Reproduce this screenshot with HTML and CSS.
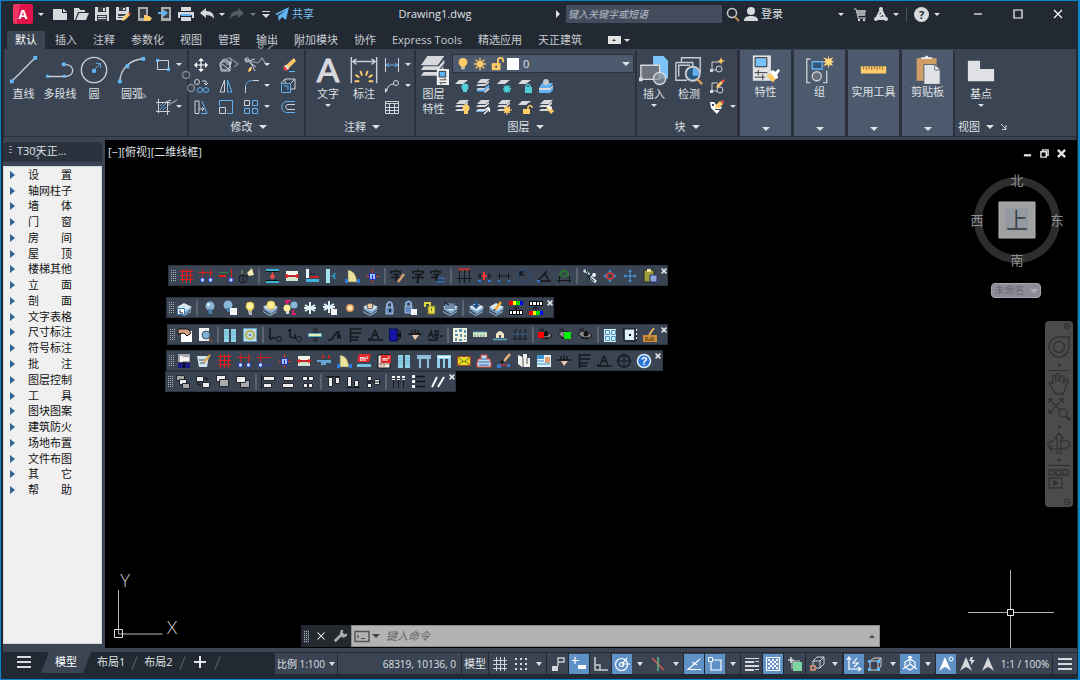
FILE: index.html
```html
<!DOCTYPE html>
<html lang="zh-CN">
<head>
<meta charset="utf-8">
<title>Drawing1.dwg</title>
<link rel="stylesheet" href="styles.css">
</head>
<body>
<svg class="sprite" aria-hidden="true">
<symbol id="new" viewBox="0 0 16 16"><path class="f" d="M1 3h9v4h5v7H1z"/><path class="f" d="M11 2.500l4 3.500h-4z"/></symbol>
<symbol id="open" viewBox="0 0 16 16"><path class="f" d="M1 14V2h5l1 2h5v2H5L2 14z"/><path class="f" d="M6 7h10l-3 7H3z"/></symbol>
<symbol id="save" viewBox="0 0 16 16"><path class="f" d="M1 1h14v14H1z"/><path class="d" d="M4 1h8v5H4zM3 9h10v6H3z"/><path class="f" d="M9 2h2v3H9zM4 10h8v1H4zM4 12h8v1H4z"/></symbol>
<symbol id="saveas" viewBox="0 0 16 16"><path class="f" d="M1 1h13v7l-6 6H1z"/><path class="d" d="M4 1h7v4H4zM3 8h8l-4 4H3z"/><path class="f" d="M8 2h2v2H8zM3 10h6v1H3z"/><path class="y" d="M7 15l1-3 5-5 2 2-5 5z"/><path class="r" d="M13 7l1-1 2 2-1 1z"/></symbol>
<symbol id="mopen" viewBox="0 0 16 16"><path fill="#a9a9a9" d="M2 1h10v14H2z"/><path class="d" d="M4 3h6v9H4z"/><path class="y" d="M8 14V9h2l1 1h3v1l2 1-2 3H8z"/></symbol>
<symbol id="msave" viewBox="0 0 16 16"><path fill="#a9a9a9" d="M4 1h10v14H4z"/><path class="d" d="M6 3h6v9H6z"/><path d="M1 6h5V3l5 4-5 4V8H1z" fill="#62b2f0"/></symbol>
<symbol id="print" viewBox="0 0 16 16"><path class="f" d="M3 1h10v4H3zM0 6h16v6h-2V9H2v3H0z"/><path fill="#62b2f0" d="M3 8h10v2H3z"/><path class="f" d="M3 11h10v4H3z"/></symbol>
<symbol id="undo" viewBox="0 0 16 16"><path class="f" d="M1 7l6-5v3c6 0 8 3 8 8-2-3-4-4-8-4v3z"/></symbol>
<symbol id="redo" viewBox="0 0 16 16"><path fill="#555b65" d="M15 7L9 2v3c-6 0-8 3-8 8 2-3 4-4 8-4v3z"/></symbol>
<symbol id="menu" viewBox="0 0 16 16"><path class="f" d="M4 5h8v1H4zM4 8h8l-4 4z"/></symbol>
<symbol id="plane" viewBox="0 0 16 16"><path fill="#62b2f0" d="M1 8L15 1l-3 13-4-3-3 4-1-5 8-6-9 5z"/></symbol>
<symbol id="search" viewBox="0 0 16 16"><circle class="s2" cx="7" cy="7" r="4.500"/><path class="yl" d="M10 11l4 4"/></symbol>
<symbol id="user" viewBox="0 0 16 16"><circle class="f" cx="8" cy="5" r="4"/><path class="f" d="M1 15c0-4 3-5 7-5s7 1 7 5z"/></symbol>
<symbol id="cart" viewBox="0 0 16 16"><path class="s" d="M2 3h2l2 9h8"/><path fill="#a5a7aa" d="M4 4h10l-1 6H6z"/><circle class="f" cx="7" cy="14" r="1.200"/><circle class="f" cx="12" cy="14" r="1.200"/></symbol>
<symbol id="apps" viewBox="0 0 16 16"><path d="M8 3L3 13h10zM8 3l1 5-6 5M3 13l9-2" fill="none" stroke="#d7d9dc" stroke-width="2"/><circle class="f" cx="8" cy="3" r="2"/><circle class="f" cx="3" cy="13" r="2"/><circle class="f" cx="13" cy="13" r="2"/></symbol>
<symbol id="min" viewBox="0 0 16 16"><path class="w" d="M4 8h8"/></symbol>
<symbol id="max" viewBox="0 0 16 16"><path class="w" d="M4 4h8v8H4z"/></symbol>
<symbol id="x" viewBox="0 0 16 16"><path class="w" d="M4 4l8 8M12 4l-8 8"/></symbol>

<symbol id="line" viewBox="0 0 32 32"><path class="s2" d="M3 28L28 3"/><path class="n" d="M1 26h4v4H1zM26 1h4v4h-4z"/></symbol>
<symbol id="pline" viewBox="0 0 32 32"><path class="s2" d="M2 23h20c10-1 10-12 0-13"/><path class="n" d="M1 21h3v3H1zM19 21h3v3h-3zM18 8h4v4h-4z"/></symbol>
<symbol id="circle" viewBox="0 0 32 32"><circle class="s2" cx="16" cy="16" r="13.500"/><path class="bl" d="M15 17l8-8M18 9h5v5"/><path class="n" d="M14 15h4v4h-4z"/></symbol>
<symbol id="arc" viewBox="0 0 32 32"><path class="s2" d="M3 28C4 14 14 5 28 4"/><path class="n" d="M1 26h4v4H1zM9 10h4v4H9zM26 2h4v4h-4z"/></symbol>
<symbol id="rect" viewBox="0 0 16 16"><path class="s" d="M2.500 3.500h11v9h-11z"/><path class="n" d="M1 2h3v3H1zM12 11h3v3h-3z"/></symbol>
<symbol id="hatch" viewBox="0 0 16 16"><path class="s" d="M3.500 0v14M12.500 2v14M1 3.500h14M1 12.500h14M11 3l5-2"/><path class="bl" d="M5 7l3-3M5 11l6-7M8 11l3-3"/></symbol>
<symbol id="move" viewBox="0 0 16 16"><path class="w" d="M8 3v10M3 8h10" stroke-width="2"/><path fill="#fff" d="M8 1l3 3H5zM8 15l3-3H5zM1 8l3-3v6zM15 8l-3-3v6z"/></symbol>
<symbol id="rotate" viewBox="0 0 16 16"><path class="s" d="M3 5v9h9V5zM4 7l8 6M13 2v5H8"/><circle class="s" cx="7" cy="8" r="5"/></symbol>
<symbol id="trim" viewBox="0 0 16 16"><path class="s" d="M2 2l11 8M7 4l5 10M5 4L12 2M8 10l-2 4"/><circle class="s" cx="4" cy="3" r="2"/><path class="y" d="M6 11l3-1-1 4-3 1z"/></symbol>
<symbol id="erase" viewBox="0 0 16 16"><path class="y" d="M5 9l9-8 2 3-8 8z"/><path fill="#f3f3f3" d="M4 9l2-1 3 4-2 1z"/><path class="r" d="M3 10l2-1 3 4-3 1z"/><path class="bl" d="M9 14.500h6"/></symbol>
<symbol id="copy" viewBox="0 0 16 16"><circle class="s" cx="4" cy="4" r="2.500"/><path class="s" d="M9 3h4v4M11 5l2 2 2-2"/><circle class="bl" cx="7" cy="12" r="2.500"/><circle class="bl" cx="13" cy="12" r="2.500"/></symbol>
<symbol id="mirror" viewBox="0 0 16 16"><path class="s" d="M6.500 2v12H2z"/><path class="bl" d="M9.500 2v12H14z"/></symbol>
<symbol id="fillet" viewBox="0 0 16 16"><path class="s" d="M2.500 15V9M10 2.500h6"/><path class="bl" d="M2.500 9c0-4 3-6.500 7-6.500"/></symbol>
<symbol id="box" viewBox="0 0 16 16"><path class="s" d="M5 5V1h10v10h-4M11 5l4-4M1 5l4-4"/><path class="bl" d="M1.500 5.500h9v9h-9zM4 8h4v4"/></symbol>
<symbol id="stretch" viewBox="0 0 16 16"><path class="s" d="M6 14.500H2V2h4v12M6 10h5M9 8l2 2-2 2"/><path class="bl" d="M9 2l5 12.500H8"/></symbol>
<symbol id="scale" viewBox="0 0 16 16"><path class="bl" d="M1.500 7V1.500h13v13H9"/><path class="s" d="M1.500 8.500h6v6h-6z"/></symbol>
<symbol id="array" viewBox="0 0 16 16"><path class="bl" d="M9.500 1.500h5v5h-5zM9.500 9.500h5v5h-5zM1.500 9.500h5v5h-5z"/><path class="s" d="M1.500 1.500h5v5h-5z"/></symbol>
<symbol id="offset" viewBox="0 0 16 16"><path class="bl" d="M15 2.500H7c-7 0-7 11 0 11h8"/><path class="s" d="M15 5.500H8c-3 0-3 5 0 5h7"/></symbol>

<symbol id="text" viewBox="0 0 32 32"><text x="16" y="29" font-size="36" text-anchor="middle" font-family="Liberation Sans" fill="#d7d9dc" stroke="#d7d9dc" stroke-width="1.200">A</text></symbol>
<symbol id="dim" viewBox="0 0 32 32"><path class="s2" d="M2.500 2v28M29.500 2v28M4 7h24M8 4L4 7l4 3M24 4l4 3-4 3"/><path d="M7 21l4 3M12 17l2 5M20 17l-2 5M25 21l-4 3M6 28h5M21 28h5" stroke="#ffcb68" stroke-width="2"/></symbol>
<symbol id="lin" viewBox="0 0 16 16"><path class="s" d="M1.500 1v14M14.500 1v14"/><path class="bl" d="M2 8h12M5 6L2 8l3 2M11 6l3 2-3 2"/></symbol>
<symbol id="leader" viewBox="0 0 16 16"><path class="s" d="M1 14L5 8q1-2 5-2"/><path class="f" d="M1 15v-5l3 2z"/><circle class="s" cx="12" cy="5" r="2.500"/></symbol>
<symbol id="table" viewBox="0 0 16 16"><path class="s" d="M1.500 2.500h13v12h-13zM1 4.500h14M1 8.500h14M1 11.500h14M5.500 4v11M10.500 4v11"/></symbol>
<symbol id="layers" viewBox="0 0 32 32"><g class="f"><path d="M9 1h18l-7 10H2zM5 12h16l6-7v4l-6 7H2zM5 18h16l5-6v4l-5 6H2z"/></g><path fill="#eef0f2" d="M19 15h13v17H19z"/><path fill="#5cb3f5" stroke="#333" d="M21.500 17.500h7v6h-7z"/><path d="M22 26.500h7l-2-2M29 29.500h-7l2 2" fill="none" stroke="#444"/></symbol>
<symbol id="bulb" viewBox="0 0 16 16"><circle class="y" cx="8" cy="6" r="5"/><path class="y" d="M5 8h6l-1 4H6z"/><path class="f" d="M6 12h4v2H6z"/></symbol>
<symbol id="sun" viewBox="0 0 16 16"><circle class="y" cx="8" cy="8" r="4"/><path d="M8 1v3M8 12v3M1 8h3M12 8h3M3 3l2 2M11 11l2 2M13 3l-2 2M3 13l2-2" stroke="#ffcb68" stroke-width="1.500"/></symbol>
<symbol id="lock" viewBox="0 0 16 16"><path d="M9 8V4q0-3 3-3t3 3v2" fill="none" stroke="#ffcb68" stroke-width="2"/><path class="y" d="M2 7h10v8H2z"/><path class="d" d="M6 10h2v2H6z"/></symbol>
<symbol id="ly" viewBox="0 0 16 16"><path class="f" d="M5 2h9l-5 4H1z"/></symbol>
<symbol id="ly3" viewBox="0 0 16 16"><path class="f" d="M6 1h9l-4 4H2zM3 6h7l4-3v2l-4 3H1zM3 10h7l4-3v2l-4 3H1z"/></symbol>
<symbol id="l1" viewBox="0 0 16 16"><use href="#ly"/><circle fill="#4fd0d8" cx="11" cy="9" r="3.500"/><path fill="#4fd0d8" d="M9 11h4v3H9z"/></symbol>
<symbol id="l2" viewBox="0 0 16 16"><use href="#ly3"/><path class="bl" d="M2 12.500h7l5-5" stroke-width="2"/><path class="f" d="M13 10l2 1-5 4-1-1z"/></symbol>
<symbol id="l3" viewBox="0 0 16 16"><use href="#ly"/><circle cx="11" cy="11" r="3" fill="#2c8f9c"/><path d="M11 7v8M7 11h8M8 8l6 6M14 8l-6 6" stroke="#4fd0d8" stroke-width="1.500"/></symbol>
<symbol id="l4" viewBox="0 0 16 16"><use href="#ly"/><path fill="none" stroke="#4fd0d8" stroke-width="1.500" d="M9 9V8q2-3 4 0v2"/><path fill="#4fd0d8" d="M8 9h7v6H8z"/></symbol>
<symbol id="l5" viewBox="0 0 16 16"><path fill="#62b2f0" d="M4 5h11l-3 5H1zM1 12h11l3-3v3l-3 3H1z"/><path class="f" d="M1 10h11l3-3v2l-3 3H1z"/><circle fill="#c4c9d0" cx="8" cy="4" r="3"/></symbol>
<symbol id="l6" viewBox="0 0 16 16"><use href="#ly3"/><circle class="y" cx="12" cy="9" r="3.500"/><path class="y" d="M10 12h4v3h-4z"/></symbol>
<symbol id="l7" viewBox="0 0 16 16"><use href="#ly3"/><path class="bl" d="M1 12.500h8"/><path class="w" d="M9 15l5-5M11 9.500h3.500V13"/></symbol>
<symbol id="l8" viewBox="0 0 16 16"><use href="#ly3"/><circle class="y" cx="11" cy="11" r="3"/><path d="M11 6v10M6 11h10M8 8l6 6M14 8l-6 6" stroke="#ffcb68"/></symbol>
<symbol id="l9" viewBox="0 0 16 16"><use href="#ly"/><path class="y" d="M6 10h7v5H6z"/><path fill="none" stroke="#ffcb68" stroke-width="1.500" d="M11 10V8q2-3 4 0v1"/></symbol>
<symbol id="l10" viewBox="0 0 16 16"><use href="#ly3"/><path class="y" d="M8 9l3-2 5 5-3 3z"/><path fill="#fff" d="M9 8l2-2 3 3-2 2z"/></symbol>

<symbol id="insert" viewBox="0 0 32 32"><path fill="#7cc3fa" d="M15 1h11l5 5v19H15z"/><path fill="#6d7480" stroke="#d7d9dc" stroke-width="1.500" d="M2 11h20v15H2z"/><path class="f" d="M0 24h4v4H0z"/><circle fill="#8a909a" fill-opacity=".7" stroke="#d7d9dc" stroke-width="1.500" cx="22" cy="25" r="6.500"/></symbol>
<symbol id="detect" viewBox="0 0 32 32"><path class="s2" d="M8 7V3h20v16M2 8h18v4M2 8v19h12"/><path class="s2" d="M5 23V11h12"/><circle fill="#2b5878" stroke="#c9ccd1" stroke-width="2" cx="20" cy="20" r="7.500"/><path fill="#62b2f0" d="M20 14h3q4 3 3 8h-6z"/><path d="M25 26l5 5" stroke="#d99a4e" stroke-width="2.500"/></symbol>
<symbol id="b1" viewBox="0 0 16 16"><path class="s" d="M11 5H3v8h5"/><circle class="s" cx="10" cy="12" r="3"/><path class="f" d="M1 12h3v3H1z"/><path class="y" d="M12 0l1 3 3 1-3 1-1 3-1-3-3-1 3-1z"/></symbol>
<symbol id="b2" viewBox="0 0 16 16"><path class="s" d="M9 5H3v8h5"/><circle class="s" cx="11" cy="12" r="3"/><path class="f" d="M1 12h3v3H1z"/><path class="y" d="M7 10l1-3 4-4 2 2-4 4z"/><path class="r" d="M12 3l2-2 2 2-2 2z"/></symbol>
<symbol id="b3" viewBox="0 0 16 16"><path fill="#fff" d="M1 3h4l3 4 5 1-5 7-6-6z"/><path class="d" d="M3 5h2v2H3zM6 10h5v1H6z"/><path class="y" d="M6 9l1-3 4-4 3 3-4 4z"/><path class="r" d="M12 2l2-1 1 2-1 2z"/></symbol>
<symbol id="props" viewBox="0 0 32 32"><path fill="#dfe1e4" d="M2 1h20v28H2z"/><path fill="#78c1fa" stroke="#222" d="M4.500 3.500h13v10h-13z"/><path d="M4 20h14M4 25h11M8 17v6M13 22v6" stroke="#333"/><path class="y" d="M17 23l7-3 5 5-5 6z"/><path fill="#fff" d="M21 19l3-2 3 2 3-3 2 2-3 4 1 4-3 1z"/></symbol>
<symbol id="group" viewBox="0 0 32 32"><path class="s2" d="M6 5H2v26h4M20 31h4V18"/><path fill="#315878" stroke="#62b2f0" stroke-width="1.500" d="M8 8h11v8H8z"/><circle fill="#68707d" stroke="#c9ccd1" stroke-width="1.500" cx="13" cy="24" r="5"/><path fill="#ffd77c" d="M26 1l1 4 4-2-2 4 4 1-4 1 2 4-4-2-1 5-1-5-5 2 3-4-4-1 4-1-3-4 5 2z"/></symbol>
<symbol id="ruler" viewBox="0 0 32 32"><path class="y" d="M2 13h28v8H2z"/><path d="M5 13v3M8 13v4M11 13v3M14 13v4M17 13v3M20 13v4M23 13v3M26 13v4" stroke="#7d6334"/></symbol>
<symbol id="clip" viewBox="0 0 32 32"><path fill="#cf9f65" d="M4 4h22v25H4z"/><path fill="#eee" d="M9 5V3h4q2-4 4 0h4v2z"/><path fill="#dfe1e4" stroke="#555d6a" d="M12 11h13l5 5v17H12z"/><path fill="#fff" stroke="#555d6a" d="M24 11v6h6z"/></symbol>
<symbol id="base" viewBox="0 0 32 32"><path fill="#dfe1e4" d="M2 6h13v9h15v13H2z"/></symbol>

<symbol id="grid" viewBox="0 0 16 16"><path stroke="#f01818" fill="none" d="M2 3.500h13M2 7.500h13M2 11.500h13M4.500 1v14M8.500 1v14M12.500 1v14"/></symbol>
<symbol id="ax1" viewBox="0 0 16 16"><path stroke="#d42020" fill="none" d="M1 4.500h14M4.500 1v9M12.500 1v9"/><circle class="ball" cx="4.500" cy="12" r="2.200"/><circle class="ball" cx="12.500" cy="12" r="2.200"/></symbol>
<symbol id="ax2" viewBox="0 0 16 16"><path stroke="#2e8b3c" d="M1 4.500h9"/><path stroke="#d42020" d="M13.500 1v9"/><path stroke="#f01818" stroke-width="2" d="M1 8h7"/><circle class="ball" cx="13" cy="12" r="2.200"/></symbol>
<symbol id="ax3" viewBox="0 0 16 16"><path stroke="#d42020" d="M1 4.500h14M4.500 1v9"/><circle class="ball" cx="4.500" cy="12" r="2.200"/><path stroke="#1e3fc0" stroke-dasharray="2 1" d="M8 12h8"/></symbol>
<symbol id="ax4" viewBox="0 0 16 16"><circle class="k" cx="5" cy="11" r="4"/><path class="k" d="M5 8v6M8 9l5-4"/><path stroke="#6fae5c" d="M4 2v4"/><path fill="#f5eeb0" d="M9 5l5-5 1 4 1 3-5 1z"/></symbol>
<symbol id="wa1" viewBox="0 0 16 16"><path fill="#39b6d4" d="M2 1h13v2H2zM2 13h13v2H2z"/><path fill="#111" d="M2 3h13v1H2zM2 12h13v1H2z"/><path class="r" d="M8 4v2l-3 3h7L9 6V4zM7 9h3v2H7z"/></symbol>
<symbol id="wa2" viewBox="0 0 16 16"><path fill="#f4f6ee" d="M2 3h12v4H2z"/><path fill="#cfe6ca" d="M2 9h12v4H2z"/><path stroke="#e22" stroke-width="1.500" d="M1 8h14M3 6v4M13 6v4"/></symbol>
<symbol id="wa3" viewBox="0 0 16 16"><path fill="#e8f4fa" d="M2 1h3v9H2z"/><path fill="#c22" d="M6 8h9v2H6z"/><path fill="#41b5df" d="M2 11h13v3H2z"/><path class="k" d="M6 7l2-2M9 7l2-2"/></symbol>
<symbol id="wa4" viewBox="0 0 16 16"><path fill="#9fe3ee" d="M2 1h4v14H2z"/><path stroke="#39a9d8" d="M7 8h5M10 5v6M12 5l-2 3 2 3"/></symbol>
<symbol id="door" viewBox="0 0 16 16"><path fill="#ece49c" stroke="#6d6a4a" stroke-width=".6" d="M4 14V2c6 1 8 5 9 12z"/><path fill="#2b7be0" d="M1 11h3v4H1zM13 11h3v4h-3z"/></symbol>
<symbol id="col" viewBox="0 0 16 16"><path stroke="#d33" d="M8.500 1v14M2 8.500h13"/><path fill="#9fc4ff" stroke="#2430b0" d="M5.500 5.500h6v6h-6z"/><path fill="#2430b0" d="M8 7h1v4H8z"/></symbol>
<symbol id="char" viewBox="0 0 16 16"><path class="k" d="M8 1v2M3 6V3.500h10V6M5 6.500h6l-3 2V14H6M2 9.500h12" stroke-width="1.500"/></symbol>
<symbol id="charp" viewBox="0 0 16 16"><path class="k" d="M6 1v2M1 6V3.500h9V6M3 6.500h5l-2 2V13M1 9.500h9" stroke-width="1.500"/><path stroke="#d8a070" stroke-width="2.500" d="M8 14l6-8"/></symbol>
<symbol id="charl" viewBox="0 0 16 16"><path class="k" d="M6 1v2M1 6V3.500h9V6M3 6.500h5l-2 2V13M1 9.500h9" stroke-width="1.500"/><path stroke="#345f99" stroke-width="2" d="M8 10h7M6 14h9"/></symbol>
<symbol id="dm1" viewBox="0 0 16 16"><path stroke="#c33" stroke-width="2" d="M2 1.500h12"/><path class="k" d="M3.500 2v13M8.500 2v13M13.500 2v13M1 10.500h15"/></symbol>
<symbol id="dm2" viewBox="0 0 16 16"><path class="k" d="M1 8h15M4 5v6M13 5v6"/><path stroke="#e33" stroke-width="2" d="M8 4v8M6 8h5"/><path fill="#2d7bd6" d="M2 12h3v2H2zM12 12h3v2h-3z"/></symbol>
<symbol id="dm3" viewBox="0 0 16 16"><path class="k" d="M1 8h14M3.500 5v6M12.500 5v6"/><path fill="#2d7bd6" d="M2 12h2v2H2zM12 12h2v2h-2z"/></symbol>
<symbol id="dm4" viewBox="0 0 16 16"><circle cx="8" cy="8" r="6" fill="none" stroke="#284a83"/><path class="k" d="M8 8L4 5M4 8V4h4" stroke-width="1.500"/></symbol>
<symbol id="dm5" viewBox="0 0 16 16"><path class="k" d="M2 13L11 3M2 13h13M8 6q4 2 4 7" stroke-width="1.500"/><path fill="#2d7bd6" d="M1 12h3v2H1z"/></symbol>
<symbol id="dm6" viewBox="0 0 16 16"><path stroke="#28772f" stroke-width="2" fill="none" d="M4 8q0-5 4-5t4 5M6 9l6-2"/><path class="k" d="M1 12.500h14M3.500 8v7M13.500 8v7"/></symbol>
<symbol id="ed1" viewBox="0 0 16 16"><path stroke="#c9e7e8" stroke-width="3" d="M2 2l5 5M8 9l6 5"/><path class="k" d="M4 2l4 10M3 5l9 8"/><circle fill="#eef" cx="12" cy="7" r="2"/></symbol>
<symbol id="ed2" viewBox="0 0 16 16"><path class="mv" d="M8 1l3 4H5zM8 15l3-4H5zM1 8l4-3v6zM15 8l-4-3v6z"/><circle cx="8" cy="8" r="3" fill="none" stroke="#d33" stroke-width="1.500"/></symbol>
<symbol id="ed3" viewBox="0 0 16 16"><path class="mv" d="M8 1l3 3H9v3h3V5l3 3-3 3V9H9v3h2l-3 3-3-3h2V9H4v2L1 8l3-3v2h3V4H5z"/></symbol>
<symbol id="paste" viewBox="0 0 16 16"><path fill="#9a9f38" stroke="#222" d="M2 2h10v12H2z"/><path fill="#e6e6a0" d="M5 1h4v3H5z"/><path fill="#8fa2d5" stroke="#25306c" d="M8 7h7v7H8z"/></symbol>

<symbol id="lyb" viewBox="0 0 16 16"><path fill="#7fa9cc" d="M1 9l7-4 8 4-7 5z"/><path fill="#d6e7f2" d="M1 7l7-4 8 4-7 4z"/><path fill="#9cbfd9" d="M1 11l7 4 7-4v1l-7 4-7-4z"/></symbol>
<symbol id="q1" viewBox="0 0 16 16"><use href="#lyb"/><path fill="#fff" stroke="#2e80b8" d="M1.500 8.500h7v6h-7z"/><path class="k" d="M4 10v3h3"/></symbol>
<symbol id="q2" viewBox="0 0 16 16"><circle fill="#8ab6da" cx="8" cy="6" r="4.500"/><path fill="#4a7fa8" d="M6 9h4v5H7z"/><circle fill="#e1f3ff" cx="6.500" cy="4.500" r="1.500"/></symbol>
<symbol id="q3" viewBox="0 0 16 16"><circle fill="#8ab6da" cx="6" cy="5" r="4.500"/><path fill="#4a7fa8" d="M4 8h4v4H5z"/><path fill="#f3f3f3" d="M8 8h7v7H8z"/></symbol>
<symbol id="q4" viewBox="0 0 16 16"><circle fill="#fdf09a" stroke="#e0c040" cx="8" cy="6" r="4"/><path fill="#e9d25a" d="M6 9h4v2H6z"/><path fill="#b5b5b5" d="M6 11h4v4H7z"/></symbol>
<symbol id="q5" viewBox="0 0 16 16"><use href="#lyb"/><circle fill="#fdf09a" stroke="#e0c040" cx="9" cy="5" r="4"/><path fill="#b5b5b5" d="M7 9h4v2H7z"/></symbol>
<symbol id="q6" viewBox="0 0 16 16"><circle fill="#fdf09a" cx="5" cy="8" r="3.500"/><path fill="#ddd" d="M4 11h3v3H4z"/><circle fill="#8ab6da" cx="12" cy="5" r="3.500"/><path d="M3 1h4l-3 3M11 10v4h3" fill="none" stroke="#e21a70" stroke-width="2"/></symbol>
<symbol id="q7" viewBox="0 0 16 16"><path stroke="#dff1f5" stroke-width="2" d="M8 2v12M3 5l10 6M13 5L3 11M2 8h12"/></symbol>
<symbol id="q8" viewBox="0 0 16 16"><path stroke="#dff1f5" stroke-width="2" d="M7 1v12M2 4l10 6M12 4L2 10M1 7h12"/><path fill="#f3f3f3" d="M9 9h6v6H9z"/></symbol>
<symbol id="q9" viewBox="0 0 16 16"><circle fill="#e59a5a" cx="8" cy="8" r="4"/><circle fill="#ffe7b0" cx="8" cy="8" r="2.500"/></symbol>
<symbol id="q10" viewBox="0 0 16 16"><use href="#lyb"/><circle fill="#f2c7a0" stroke="#555" cx="8" cy="6" r="3"/></symbol>
<symbol id="q11" viewBox="0 0 16 16"><path fill="none" stroke="#89a9d6" stroke-width="2" d="M5 7V4q3-4 5 0v4"/><path fill="#6287bd" stroke="#9fbbe0" d="M4 7h7v7H4z"/><path fill="#12264d" d="M7 9h2v3H7z"/></symbol>
<symbol id="q12" viewBox="0 0 16 16"><path fill="none" stroke="#89a9d6" stroke-width="2" d="M4 6V3q3-3 5 0v4"/><path fill="#6287bd" stroke="#9fbbe0" d="M3 6h7v7H3z"/><path fill="#f3f3f3" d="M9 9h6v6H9z"/></symbol>
<symbol id="q13" viewBox="0 0 16 16"><path fill="none" stroke="#e0d840" stroke-width="2" d="M3 7V3h5v4"/><path fill="#e5dc4c" stroke="#77702a" d="M6 6h7v8H6z"/><path fill="#77702a" d="M9 8h1v3H9z"/></symbol>
<symbol id="q14" viewBox="0 0 16 16"><use href="#lyb"/><path fill="#567699" d="M3 3h10v6H3z" opacity=".8"/><path class="k" d="M2 2l5 3"/></symbol>
<symbol id="q15" viewBox="0 0 16 16"><use href="#lyb"/><path fill="#1d5282" d="M7 1h3v4h2l-4 4-4-4h3z"/></symbol>
<symbol id="q16" viewBox="0 0 16 16"><use href="#lyb"/><path stroke="#f0aa34" stroke-width="2.500" d="M7 10l6-8"/><path class="k" d="M6 11l1-2"/></symbol>
<symbol id="q17" viewBox="0 0 16 16"><path fill="#f00" d="M1 1h4v4H1z"/><path fill="#ff0" d="M5 1h3v4H5z"/><path fill="#0d0" d="M8 1h4v4H8z"/><path fill="#00f" d="M12 1h3v4h-3z"/><path fill="#000" d="M1 10h14v5H1z"/><path fill="#fff" d="M2 11h2v3H2zM5 11h3v3H5zM9 11h2v3H9zM12 11h2v3h-2z"/><path class="k" d="M8 5v5M5 8h6"/></symbol>
<symbol id="q18" viewBox="0 0 16 16"><path fill="#000" d="M1 1h14v5H1z"/><path fill="#fff" d="M2 2h2v3H2zM5 2h3v3H5zM9 2h2v3H9zM12 2h2v3h-2z"/><path fill="#f00" d="M1 11h4v4H1z"/><path fill="#ff0" d="M5 11h3v4H5z"/><path fill="#0d0" d="M8 11h4v4H8z"/><path fill="#00f" d="M12 11h3v4h-3z"/><path class="k" d="M8 6v5M5 8h6"/></symbol>

<symbol id="p1" viewBox="0 0 16 16"><path fill="#fff" d="M4 4h11v11H4z"/><path fill="#d9a183" stroke="#111" d="M1 2h10l3 4-4 3-3-3-6 1z"/></symbol>
<symbol id="p2" viewBox="0 0 16 16"><path fill="#f1f5f8" d="M2 1h10v13H2z"/><circle fill="#7eb0d4" stroke="#456" cx="9" cy="8" r="4"/><path stroke="#7a4d28" stroke-width="2" d="M12 11l3 4"/></symbol>
<symbol id="p3" viewBox="0 0 16 16"><path fill="#8ed2e8" d="M2 2h5v13H2zM9 2h5v13H9z"/><path stroke="#5aa7c4" stroke-width=".6" d="M2 5h5M2 8h5M2 11h5M9 5h5M9 8h5M9 11h5"/></symbol>
<symbol id="p4" viewBox="0 0 16 16"><path fill="#bcdced" stroke="#5ca0c5" d="M1.500 1.500h13v13h-13z"/><circle fill="none" stroke="#b3b34e" stroke-width="2" cx="8" cy="8" r="4"/><path fill="#777" d="M7 7h2v2H7z"/></symbol>
<symbol id="p5" viewBox="0 0 16 16"><path class="k" d="M3 1v10h6M2 9l2 4" stroke-width="1.500"/><circle class="k" cx="12" cy="12" r="2.500"/></symbol>
<symbol id="p6" viewBox="0 0 16 16"><path class="k" d="M3 2v8l5 1M8 7v5M1 4l3-2" stroke-width="1.500"/><circle class="k" cx="12" cy="12" r="2.500"/></symbol>
<symbol id="p7" viewBox="0 0 16 16"><path fill="#2c313b" d="M6 1h5v14H6z"/><path fill="#e8eeb0" stroke="#4fa8c6" d="M1.500 6.500h13v3h-13z"/></symbol>
<symbol id="p8" viewBox="0 0 16 16"><path class="k" d="M1 13h3l6-8h3M10 9h4M11 12V6l3 6" stroke-width="1.500"/></symbol>
<symbol id="p9" viewBox="0 0 16 16"><path class="k" d="M3.500 15V2h11M4 6h10M4 10h8M4 13h7" stroke-width="1.500"/></symbol>
<symbol id="p10" viewBox="0 0 16 16"><path class="k" d="M1 13h15M4 12l4-9 4 9M6 8h5M3 11l-2 2" stroke-width="1.300"/></symbol>
<symbol id="p11" viewBox="0 0 16 16"><path fill="#1414a8" stroke="#0a0a50" d="M2.500 2h8v12h-8z"/><path fill="#111" d="M14 5v6l-5-3z"/><path class="k" d="M9 4h4v8H9"/></symbol>
<symbol id="p12" viewBox="0 0 16 16"><path class="k" d="M1 7h14M5 3v4M8 2v5M11 3v4" stroke-width="1.300"/><path fill="#efc9ad" d="M5 8h7l-4 5z"/></symbol>
<symbol id="p13" viewBox="0 0 16 16"><path class="k" d="M1 11l3-7 2 7M2 8h4M8 4v7h3V4zM8 8h3M1 13h10M13 9h3" stroke-width="1.300"/></symbol>
<symbol id="p14" viewBox="0 0 16 16"><path fill="#f2f4dd" d="M1 1h14v14H1z"/><path fill="#5b8fae" d="M3 3h2v2H3zM7 2h3v3H7zM12 3h2v3h-2zM3 7h3v2H3zM8 7h2v3H8zM12 8h2v2h-2zM3 11h2v3H3zM7 12h3v2H7zM12 12h2v1h-2z"/></symbol>
<symbol id="p15" viewBox="0 0 16 16"><path fill="#eee6b5" d="M1 5h14v5H1z"/><path stroke="#37a0c8" d="M1 5h14M3 10V7M6 10V7M9 10V7M12 10V7"/></symbol>
<symbol id="p16" viewBox="0 0 16 16"><path fill="#eee7c5" d="M4 11V7q4-6 8 0v4z"/><path fill="#4b5260" d="M7 8h2v4H7z"/><path stroke="#5ba8c0" stroke-width="1.500" d="M1 12.500h14"/></symbol>
<symbol id="p17" viewBox="0 0 16 16"><path class="k" d="M3 12V4l1-2M8 12V4l1-2M13 12V4l1-2M1 12h14"/><path stroke="#28639a" d="M1 7h14"/></symbol>
<symbol id="eye" viewBox="0 0 16 16"><path fill="#8b8d8a" stroke="#111" d="M1 7q7-7 14 2-7 5-14-2z"/><circle fill="#111" cx="9" cy="7" r="2.500"/><path class="k" d="M2 3l5-1M4 11l8 1"/></symbol>
<symbol id="p18" viewBox="0 0 16 16"><use href="#eye"/><path fill="#f00" d="M1 5h6v6H1z"/></symbol>
<symbol id="p19" viewBox="0 0 16 16"><use href="#eye"/><path fill="#0e0" d="M7 5h7v7H7z"/></symbol>
<symbol id="p20" viewBox="0 0 16 16"><path fill="#d7ecf6" d="M2 2h12v13H2z"/><path fill="none" stroke="#4a96ba" d="M3.500 3.500h4v4h-4zM9.500 3.500h4v4h-4zM3.500 9.500h4v4h-4zM9.500 9.500h4v4h-4z"/></symbol>
<symbol id="p21" viewBox="0 0 16 16"><path fill="#dff2fb" d="M3 2h9v11H3z"/><path class="k" d="M1 2h13v12H2z"/><path fill="#111" d="M7 7h2v2H7z"/><path stroke="#fff" stroke-dasharray="2 2" d="M14.500 2v12"/></symbol>
<symbol id="p22" viewBox="0 0 16 16"><path fill="#c98d3a" d="M1 8h14v7H1z"/><path stroke="#513716" d="M3 11h3M8 11h4M3 13h9"/><path stroke="#e9b45d" stroke-width="2" d="M7 8l5-7"/></symbol>
<symbol id="r1" viewBox="0 0 16 16"><path fill="#a8a8a8" d="M2 1h12v8H2z"/><path fill="#f4f4f4" d="M4 4h9v4H4zM4 3h3v6H4z"/><path fill="#171a80" d="M2 10h5v5H2zM9 10h5v5H9z"/><path fill="#111" d="M7 9h2v6H7z"/></symbol>
<symbol id="r2" viewBox="0 0 16 16"><path fill="#cfe4e8" d="M1 3h12l-2 11H3z"/><path stroke="#456" d="M3 7h6M4 10h5"/><path stroke="#e3a443" stroke-width="2" d="M8 9l6-7"/></symbol>
<symbol id="r3" viewBox="0 0 16 16"><path fill="#67a5d4" d="M1 6h14v4h-5v2H5v-3H1z"/><path fill="#345" d="M1 6h14v1H1z"/><path stroke="#d22" stroke-width="1.500" d="M7 2v4M13 2v4"/></symbol>
<symbol id="r4" viewBox="0 0 16 16"><path fill="#e02828" d="M3 1h12l-2 8H1z"/><text x="8" y="8" font-size="7" text-anchor="middle" fill="#fff" font-family="Liberation Sans" font-weight="bold">m²</text><path fill="#77bfdf" d="M1 11h14v3H1z"/></symbol>
<symbol id="r5" viewBox="0 0 16 16"><path fill="#f1eee7" stroke="#111" d="M2 2h12v13H2z"/><path stroke="#9c7c70" d="M5 2v13M8 2v13M2 11h12"/><path fill="#e02828" d="M5 2h10v8H5z"/><text x="10" y="8" font-size="6" text-anchor="middle" fill="#fff" font-family="Liberation Sans" font-weight="bold">m²</text></symbol>
<symbol id="r6" viewBox="0 0 16 16"><path fill="#8ebedc" d="M1 2h14v4h-2v9h-2V6H5v9H3V6H1z"/></symbol>
<symbol id="r7" viewBox="0 0 16 16"><path fill="#8fd0ea" d="M1 2h14v13h-3V6H9v9H7V6H4v9H1z"/><path fill="#e5f8ff" d="M2 3h12v2H2z"/></symbol>
<symbol id="r8" viewBox="0 0 16 16"><path fill="#e6dc2c" stroke="#a42" d="M1.500 3.500h13v9h-13z"/><path stroke="#7b6a10" fill="none" d="M2 4l6 5 6-5M2 12l5-4M14 12L9 8"/></symbol>
<symbol id="r9" viewBox="0 0 16 16"><path fill="#b8dcf2" stroke="#e0473a" d="M5 2h6v4h3v3h1v5H1V9h1V6h3z"/><path stroke="#3c5ba4" fill="none" d="M5 6h6M3 9h10M3 12h10"/></symbol>
<symbol id="r10" viewBox="0 0 16 16"><path stroke="#111" stroke-width="2" d="M5 10l4-4"/><path stroke="#e5b57e" stroke-width="2.500" d="M8 8l6-7"/><path fill="#2d7bd6" d="M1 11h4v4H1zM11 11h3v3h-3z"/><path stroke="#d33" d="M3 12h9"/></symbol>
<symbol id="r11" viewBox="0 0 16 16"><path fill="#f0f0ea" d="M2 2q4 1 5 3V1h4v4l3 0v9H6L2 11z"/><path stroke="#555" d="M7 5v9M11 5v6"/></symbol>
<symbol id="r12" viewBox="0 0 16 16"><path fill="#dff0fa" d="M1 2h14v12H1z"/><path fill="#3b93cf" d="M1 2h7v4H1z"/><path fill="#e0a070" d="M9 4h5v6H9z"/><path stroke="#3b93cf" d="M1 8h7M1 11h13"/></symbol>
<symbol id="r13" viewBox="0 0 16 16"><circle class="k" cx="8" cy="8" r="6" stroke-width="1.500"/><path class="k" d="M8 0v16M0 8h16"/></symbol>
<symbol id="r14" viewBox="0 0 16 16"><circle fill="#2a74d8" stroke="#dfe9f7" stroke-width="1.500" cx="8" cy="8" r="6.500"/><text x="8" y="12" font-size="11" text-anchor="middle" fill="#fff" font-family="Liberation Sans" font-weight="bold">?</text></symbol>
<symbol id="o1" viewBox="0 0 16 16"><g class="bx"><path class="gr" d="M1.500 1.500h8v5h-8z"/><path d="M4.500 5.500h7v5h-7z"/><path class="gr" d="M7.500 9.500h7v5h-7z"/></g></symbol>
<symbol id="o2" viewBox="0 0 16 16"><g class="bx"><path d="M1.500 2.500h7v5h-7zM7.500 8.500h7v5h-7z"/></g><path class="k" d="M3 7v4h3M9 4h3v3"/></symbol>
<symbol id="o3" viewBox="0 0 16 16"><g class="bx"><path d="M1.500 1.500h9v6h-9z"/><path class="gr" d="M4.500 5.500h9v7h-9z"/></g></symbol>
<symbol id="o4" viewBox="0 0 16 16"><g class="bx"><path class="gr" d="M5.500 6.500h9v7h-9z"/><path d="M1.500 2.500h9v6h-9z"/></g></symbol>
<symbol id="o5" viewBox="0 0 16 16"><g class="bx"><path d="M3.500 2.500h11v4h-11zM3.500 9.500h8v4h-8z"/></g><path class="k" d="M1.500 1v14"/></symbol>
<symbol id="o6" viewBox="0 0 16 16"><g class="bx"><path d="M3.500 2.500h10v4h-10zM2.500 9.500h11v4h-11z"/></g></symbol>
<symbol id="o7" viewBox="0 0 16 16"><g class="bx"><path d="M2.500 2.500h5v4h-5zM8.500 2.500h5v4h-5zM3.500 9.500h4v4h-4zM8.500 9.500h4v4h-4z"/></g></symbol>
<symbol id="o8" viewBox="0 0 16 16"><g class="bx"><path d="M3.500 3.500h4v9h-4zM10.500 3.500h4v6h-4z"/></g><path class="k" d="M1 2.500h14"/></symbol>
<symbol id="o9" viewBox="0 0 16 16"><g class="bx"><path d="M2.500 2.500h4v10h-4zM9.500 6.500h4v6h-4z"/></g><path class="k" d="M1 13.500h14"/></symbol>
<symbol id="o10" viewBox="0 0 16 16"><g class="bx"><path d="M2.500 2.500h4v4h-4zM2.500 9.500h4v4h-4zM9.500 5.500h5v5h-5z"/></g><path class="k" d="M1 8h15"/></symbol>
<symbol id="o11" viewBox="0 0 16 16"><path stroke="#f4f4f4" stroke-width="3" stroke-dasharray="2 1" d="M3.500 2v4M8.500 2v4M13.500 2v4"/><path class="k" d="M3.500 6v8M8.500 6v8M13.500 6v8"/></symbol>
<symbol id="o12" viewBox="0 0 16 16"><path fill="#f4f4f4" d="M2 1h3v3H2zM2 6h3v3H2zM2 11h3v3H2z"/><path class="k" d="M6 2.500h9M6 7.500h9M6 12.500h9" stroke-width="1.500"/></symbol>
<symbol id="o13" viewBox="0 0 16 16"><path stroke="#f4f4f4" stroke-width="2" d="M2 13l5-10M8 13l6-10"/></symbol>

<symbol id="s1" viewBox="0 0 16 16"><path class="s" d="M4.500 1v14M8.500 1v14M12.500 1v14M1 4.500h14M1 8.500h14M1 12.500h14"/></symbol>
<symbol id="s2" viewBox="0 0 16 16"><path class="f" d="M2 2h2v2H2zM7 2h2v2H7zM12 2h2v2h-2zM2 7h2v2H2zM7 7h2v2H7zM12 7h2v2h-2zM2 12h2v2H2zM7 12h2v2H7zM12 12h2v2h-2z"/></symbol>
<symbol id="s3" viewBox="0 0 16 16"><path class="s2" d="M8 10V2h6v4H8"/><path class="f" d="M2 10h6v5H2z"/></symbol>
<symbol id="s4" viewBox="0 0 16 16"><path class="w" d="M4 1v7M1 4.500h7"/><path fill="#fff" d="M7 9h8v4H7z"/></symbol>
<symbol id="s5" viewBox="0 0 16 16"><path class="s2" d="M2 1v13h13M2 9h5v5"/></symbol>
<symbol id="s6" viewBox="0 0 16 16"><circle class="w" cx="7.500" cy="8.500" r="6"/><circle class="w" cx="7.500" cy="8.500" r="2"/><path class="w" d="M8 8l5-6M8 8h8"/></symbol>
<symbol id="s7" viewBox="0 0 16 16"><path stroke="#d05558" stroke-width="1.500" d="M2 2l12 12"/><path stroke="#65b884" stroke-width="1.500" d="M8 1v14"/></symbol>
<symbol id="s8" viewBox="0 0 16 16"><path class="w" d="M14 3L2 13.500h13M6 6l5 3"/></symbol>
<symbol id="s9" viewBox="0 0 16 16"><path class="w" d="M4 4h10v10H4z"/><path fill="#5f90c6" stroke="#fff" d="M1.500 1.500h4v4h-4z"/></symbol>
<symbol id="s10" viewBox="0 0 16 16"><path class="f" d="M1 2h14v1H1zM1 5h9v2H1zM11 5h4v1h-4zM1 9h14v2H1zM1 13h9v2H1zM11 13h4v1h-4z"/></symbol>
<symbol id="s11" viewBox="0 0 16 16"><path class="w" d="M1.500 1.500h13v13h-13z"/><path fill="#fff" d="M3 3h2v2H3zM7 3h2v2H7zM11 3h2v2h-2zM5 5h2v2H5zM9 5h2v2H9zM3 7h2v2H3zM7 7h2v2H7zM11 7h2v2h-2zM5 9h2v2H5zM9 9h2v2H9zM3 11h2v2H3zM7 11h2v2H7zM11 11h2v2h-2z"/></symbol>
<symbol id="s12" viewBox="0 0 16 16"><path class="w" d="M4 1v6M1 4h6"/><path stroke="#d7d9dc" fill="none" d="M5 13V5h8"/><path fill="#7fd6a0" d="M6 6h9v9H6z"/></symbol>
<symbol id="s13" viewBox="0 0 16 16"><path class="s" d="M4 9V5l4-4h7v7l-4 4H7M4 5h7v7M11 5l4-4"/><path stroke="#e2a07a" fill="none" stroke-width="1.500" d="M2 10h4v4H2z"/></symbol>
<symbol id="s14" viewBox="0 0 16 16"><path class="w" d="M3 14V2M1 4l2-3 2 3M3 13h12M12 11l3 2-3 2M11 2L7 7h5l-4 4"/></symbol>
<symbol id="s15" viewBox="0 0 16 16"><path class="s" d="M3 5l4-3h7v8l-3 4H3zM3 5h8v9M11 5l3-3"/><path class="n" d="M1 4h3v3H1zM10 4h3v3h-3zM1 12h3v3H1zM10 12h3v3h-3z"/></symbol>
<symbol id="s16" viewBox="0 0 16 16"><path class="w" d="M8 0v8l-4 3M8 8l4 3M6 2l2-2 2 2M1 13l3-2M15 13l-3-2"/><path class="w" d="M8 3l5 3v5l-5 3-5-3V6z"/></symbol>
<symbol id="s17" viewBox="0 0 16 16"><path fill="#fff" d="M7 1l6 14-4-3-2-1-2 1-4 3z"/><circle fill="#5f90c6" stroke="#fff" cx="13" cy="3" r="2"/></symbol>
<symbol id="s18" viewBox="0 0 16 16"><path class="f" d="M7 1l6 14-4-3-2-1-2 1-4 3zM12 1h2l-1 3h3l-4 5v-4h-2z"/></symbol>
<symbol id="s19" viewBox="0 0 16 16"><path class="f" d="M8 1l6 14-4-3-2-1-2 1-4 3z"/></symbol>
<symbol id="bars" viewBox="0 0 16 16"><path class="f" d="M1 2h14v2H1zM1 7h14v2H1zM1 12h14v2H1z"/></symbol>
<symbol id="plus" viewBox="0 0 16 16"><path class="s3" d="M8 2v12M2 8h12"/></symbol>
<symbol id="wrench" viewBox="0 0 16 16"><path d="M2 14l8-8" stroke="#a9abad" stroke-width="3"/><path fill="#a9abad" d="M8 5l1-4h3l-1 3 2 2 3-1v3l-4 2-4-2z"/></symbol>
<symbol id="prompt" viewBox="0 0 16 16"><path d="M1 3.500h14v10H1z" fill="none" stroke="#555" stroke-width="1.500"/><path d="M3 7l2 1.500L3 10M7 10.500h4" fill="none" stroke="#444"/></symbol>
<symbol id="restore" viewBox="0 0 10 10"><path d="M1 3h6v6H1zM3 3V1h6v6H7" fill="none" stroke="#e4e4e4" stroke-width="1.600"/></symbol>
<symbol id="wmin" viewBox="0 0 10 10"><path d="M1 7h8" stroke="#e4e4e4" stroke-width="2.500"/></symbol>
<symbol id="wx" viewBox="0 0 10 10"><path d="M1 1l8 8M9 1L1 9" stroke="#e4e4e4" stroke-width="2.500"/></symbol>
</svg>

<header class="title">
  <div class="quick">
    <button class="logo" aria-label="应用程序菜单">A</button><button class="car" aria-label="展开菜单"></button>
    <button class="q" data-icon="new"></button><button class="q" data-icon="open"></button><button class="q" data-icon="save"></button><button class="q" data-icon="saveas"></button><button class="q" data-icon="mopen"></button><button class="q" data-icon="msave"></button><button class="q" data-icon="print"></button><button class="q" data-icon="undo"></button><button class="car thin" aria-label="放弃列表"></button><button class="q" data-icon="redo"></button><button class="car thin dim" aria-label="重做列表"></button><button class="q thin" data-icon="menu"></button>
    <button class="share" data-icon="plane">共享</button>
  </div>
  <h1>Drawing1.dwg</h1>
  <div class="find"><span class="tri"></span><input type="search" aria-label="搜索" placeholder="键入关键字或短语"><button class="q" data-icon="search"></button><button class="login" data-icon="user">登录</button></div>
  <div class="help"><button class="car" aria-label="登录选项"></button><button class="q" data-icon="cart"></button><button class="q" data-icon="apps"></button><button class="car thin" aria-label="应用列表"></button><i class="vsep"></i><button class="qm" aria-label="帮助">?</button><button class="car" aria-label="帮助列表"></button></div>
  <div class="winctl"><button data-icon="min"></button><button data-icon="max"></button><button data-icon="x"></button></div>
</header>

<nav class="tabs"><a class="on" href="#">默认</a><a href="#">插入</a><a href="#">注释</a><a href="#">参数化</a><a href="#">视图</a><a href="#">管理</a><a href="#">输出</a><a href="#">附加模块</a><a href="#">协作</a><a href="#">Express Tools</a><a href="#">精选应用</a><a href="#">天正建筑</a><button class="fold" aria-label="最小化功能区"><span></span></button></nav>

<main class="ribbon">
  <section class="panel draw">
    <div class="tools"><button class="big" data-icon="line">直线</button><button class="big wide" data-icon="pline">多段线</button><button class="big slim" data-icon="circle">圆</button><button class="big wider" data-icon="arc">圆弧</button>
    <div class="small"><button class="drop" data-icon="rect"></button><span></span><button class="drop" data-icon="hatch"></button></div></div>
  </section>
  <section class="panel modify">
    <div class="small g4"><button data-icon="move"></button><button data-icon="rotate"></button><button class="drop" data-icon="trim"></button><button data-icon="erase"></button><button data-icon="copy"></button><button data-icon="mirror"></button><button class="drop" data-icon="fillet"></button><button data-icon="box"></button><button data-icon="stretch"></button><button data-icon="scale"></button><button class="drop" data-icon="array"></button><button data-icon="offset"></button></div>
    <button class="foot">修改</button>
  </section>
  <section class="panel note">
    <div class="tools"><button class="big more" data-icon="text">文字</button><button class="big" data-icon="dim">标注</button><div class="small"><button class="drop" data-icon="lin"></button><button class="drop" data-icon="leader"></button><button data-icon="table"></button></div></div>
    <button class="foot">注释</button>
  </section>
  <section class="panel layer">
    <div class="tools"><button class="big" data-icon="layers">图层<br>特性</button>
      <div class="lay"><button class="combo"><svg><use href="#bulb"/></svg><svg><use href="#sun"/></svg><svg><use href="#lock"/></svg><i></i><span>0</span></button>
      <div class="small g5"><button data-icon="l1"></button><button data-icon="l2"></button><button data-icon="l3"></button><button data-icon="l4"></button><button data-icon="l5"></button><button data-icon="l6"></button><button data-icon="l7"></button><button data-icon="l8"></button><button data-icon="l9"></button><button data-icon="l10"></button></div></div></div>
    <button class="foot">图层</button>
  </section>
  <section class="panel block">
    <div class="tools"><button class="big more" data-icon="insert">插入</button><button class="big" data-icon="detect">检测</button><div class="small"><button data-icon="b1"></button><button data-icon="b2"></button><button class="drop" data-icon="b3"></button></div></div>
    <button class="foot">块</button>
  </section>
  <div class="tall"><button data-icon="props">特性</button><button data-icon="group">组</button><button data-icon="ruler">实用工具</button><button data-icon="clip">剪贴板</button></div>
  <section class="panel view">
    <div class="tools"><button class="big more" data-icon="base">基点</button></div>
    <button class="foot">视图<svg viewBox="0 0 8 8"><path class="s" d="M1 1l5 5M6 2v4.500H2"/></svg></button>
  </section>
</main>

<div class="work">
  <aside>
    <h2>T30天正...</h2>
    <ul><li>设　　置</li><li>轴网柱子</li><li>墙　　体</li><li>门　　窗</li><li>房　　间</li><li>屋　　顶</li><li>楼梯其他</li><li>立　　面</li><li>剖　　面</li><li>文字表格</li><li>尺寸标注</li><li>符号标注</li><li>批　　注</li><li>图层控制</li><li>工　　具</li><li>图块图案</li><li>建筑防火</li><li>场地布置</li><li>文件布图</li><li>其　　它</li><li>帮　　助</li></ul>
  </aside>
  <div class="canvas">
    <p class="vp">[−][俯视][二维线框]</p>
    <div class="wctl"><svg><use href="#wmin"/></svg><svg><use href="#restore"/></svg><svg><use href="#wx"/></svg></div>
    <svg class="cube" viewBox="0 0 100 100"><circle cx="50" cy="50" r="39" fill="none" stroke="#2d2d2d" stroke-width="8"/><path fill="#a0a0a0" stroke="#b4b4b4" d="M32 32h36v36H32z"/><path fill="#9499a0" d="M38 38h23v23H38z"/><text class="face" x="50" y="58">上</text><text x="50" y="15">北</text><text x="10" y="55">西</text><text x="90" y="55">东</text><text x="50" y="95">南</text></svg>
    <button class="ucsname">未命名<i></i></button>
    <svg class="nav" viewBox="0 0 28 186"><rect width="28" height="186" rx="4" fill="#4b4b4b"/><g fill="none" stroke="#303335"><circle cx="22" cy="5" r="3"/><path d="M20 3l4 4M24 3l-4 4M20 181h4M3 49.500h22M3 144.500h22"/><path d="M14 16h10v10a10 10 0 1 1-10-10z" stroke-width="1.500"/><circle cx="14" cy="26" r="5.500" stroke-width="1.500"/><path d="M8 69l-4-7q2-2 4 1l-1-8q2-2 3 0l1 6V54q2-2 3 0v7l2-6q2-1 3 1l-1 6 3-4q2 0 2 2l-5 13H11z" stroke-width="1.300"/><path d="M4 78l14 14M18 78L4 92M4 82v-4h4M14 78h4v4M4 88v4h4" stroke-width="1.500"/><circle cx="18" cy="92" r="4" fill="#4b4b4b" stroke-width="1.500"/><path d="M21 95l4 4" stroke-width="2.500"/><path d="M12 132v-15h-2l4-5 4 5h-2v15zM16 119c12 0 12 9-2 9-14 0-14-7-5-8M8 124l-4 2 3 4" stroke-width="1.300"/><path d="M4 149h5v5H4zM11 149h5v5h-5zM18 149h5v5h-5zM4 157h13v10H4z" stroke-width="1.300"/><circle cx="22" cy="181" r="3"/></g><path fill="#303335" d="M12 43h5l-3 3zM12 105h5l-3 3zM12 138h5l-3 3zM8 159v6l6-3z"/></svg>

    <div class="bar b1" data-bar="grid ax1 ax2 ax4 | wa1 wa2 wa3 wa4 door col | charp char charl | dm1 dm2 dm3 dm4 dm5 dm6 | ed1 ed2 ed3 paste"></div>
    <div class="bar b2" data-bar="q1 | q2 q3 q4 q5 q6 q7 q8 q9 q10 q11 q12 q13 q14 | q15 q16 q17 q18"></div>
    <div class="bar b3" data-bar="p1 p2 | p3 p4 | p5 p6 p7 p8 p9 p10 p11 p12 p13 | p14 p15 p16 p17 | p18 p19 eye | p20 p21 p22"></div>
    <div class="bar b4" data-bar="r1 r2 grid ax1 ax3 col wa2 r3 door r4 r5 p3 r6 r7 r8 r9 r10 r11 r12 p12 p9 p10 r13 r14"></div>
    <div class="bar b5" data-bar="o1 o2 o3 o4 | o5 o6 o7 | o8 o9 o10 | o11 o12 o13"></div>

    <svg class="ucs" viewBox="0 0 72 70"><path d="M6.500 18v44h44" fill="none" stroke="#b8b8b8"/><path d="M2.500 57.500h8v8h-8z" fill="none" stroke="#e0e0e0"/><text x="13" y="15">Y</text><text x="60" y="62">X</text></svg>
    <svg class="cross" viewBox="0 0 86 78"><path d="M42.500 0v39M42.500 46v32M0 42.500h39M46 42.500h40" stroke="#b0b0b0"/><path d="M39.500 39.500h6v6h-6z" fill="none" stroke="#eee"/></svg>
    <form class="cmd"><i class="grip"></i><button type="button" class="q" data-icon="x"></button><button type="button" class="q wr" data-icon="wrench"></button><label class="field" for="cmd"><svg><use href="#prompt"/></svg><i></i><input id="cmd" placeholder="键入命令" aria-label="键入命令"><b></b></label></form>
  </div>
</div>

<footer>
  <div class="sheets"><button class="q" data-icon="bars"></button><a class="on" href="#">模型</a><a href="#">布局1</a><i></i><a href="#">布局2</a><i></i><button class="q add" data-icon="plus"></button><i></i></div>
  <div class="status">
    <button class="seg ratio car2">比例 1:100</button><button class="seg coord">68319, 10136, 0</button><button class="seg">模型</button>
    <div class="seg"><button data-icon="s1"></button><button data-icon="s2"></button><button class="car" aria-label="捕捉列表"></button></div>
    <div class="seg"><button data-icon="s3"></button></div><div class="seg"><button class="act" data-icon="s4"></button></div><div class="seg"><button data-icon="s5"></button></div>
    <div class="seg"><button class="act" data-icon="s6"></button><button class="car" aria-label="极轴列表"></button><button data-icon="s7"></button><button class="car" aria-label="等轴测列表"></button></div>
    <div class="seg"><button class="act" data-icon="s8"></button></div><div class="seg"><button class="act" data-icon="s9"></button><button class="car" aria-label="对象捕捉列表"></button></div>
    <div class="seg"><button data-icon="s10"></button></div><div class="seg"><button class="act" data-icon="s11"></button></div><div class="seg"><button data-icon="s12"></button></div><div class="seg"><button data-icon="s13"></button><button class="car" aria-label="三维捕捉列表"></button></div>
    <div class="seg ucsseg"><button class="act" data-icon="s14"></button><button data-icon="s15"></button><button class="car" aria-label="过滤列表"></button><button class="act" data-icon="s16"></button><button class="car" aria-label="小控件列表"></button></div>
    <div class="seg"><button class="act" data-icon="s17"></button><button data-icon="s18"></button><button data-icon="s19"></button><button class="pct">1:1 / 100%</button></div>
    <div class="seg last"><button data-icon="bars"></button></div>
  </div>
</footer>
<svg class="smudge" viewBox="0 0 320 160" aria-hidden="true"><g fill="none" stroke="#a8adb5" stroke-width="1.500" opacity=".65"><circle cx="186" cy="75" r="3.500"/><circle cx="191" cy="88" r="3.500"/><path d="M258 47q2-4 5-1q0 4-5 1M269 42q8-3 4 3l-5 4M295 46l3-6M302 40l-4 8M222 60l8-2 8 6-4 3M246 60l12 3 4-5 4 6M138 94q5-2 8 3l-7 1M33 150q3-4 6 0t-3 6q5 2 1 3M168 105l9-5"/></g></svg>
<script src="icons.js"></script>
</body>
</html>
```
FILE: styles.css
```css
* { box-sizing: border-box; }
body { margin: 0; min-width: 1080px; height: 100vh; display: flex; flex-direction: column; background: #222933; border: 1px solid #0a86c8; border-right-width: 2px; color: #dfe1e4; font: 11px/16px "Open Sans", "Noto Sans CJK SC", sans-serif; overflow: hidden; }
button, input { font: inherit; color: inherit; background: none; border: 0; padding: 0; margin: 0; outline: 0; }
button { display: flex; align-items: center; justify-content: center; flex: none; white-space: nowrap; }
a { color: inherit; text-decoration: none; }
h1, h2, p, ul { margin: 0; padding: 0; font-size: 11px; font-weight: normal; list-style: none; }
svg { width: 16px; height: 16px; flex: none; display: block; }
.sprite { display: none; }

.s { fill: none; stroke: #d0d3d8; }
.s2 { fill: none; stroke: #c9ccd1; stroke-width: 1.5; }
.s3 { fill: none; stroke: #e6e6e6; stroke-width: 2; }
.w { fill: none; stroke: #fff; stroke-width: 1.2; }
.bl { fill: none; stroke: #62b2f0; }
.n { fill: #62b8f8; }
.f { fill: #d7d9dc; }
.y { fill: #ffcb68; }
.yl { fill: none; stroke: #b98b57; stroke-width: 2; }
.r { fill: #ee4b4b; }
.d { fill: #3a3f47; }
.k { fill: none; stroke: #14171c; }
.ball { fill: #b8dcff; stroke: #2434c0; }
.mv { fill: #4d88bb; stroke: #223b58; stroke-width: .5; }
.bx path { stroke: #22262c; fill: #ececec; }
.bx .gr { fill: #aaa; }

.title { display: flex; align-items: center; height: 26px; flex: none; padding-left: 12px; }
.title h1 { flex: 1; text-align: center; font-size: 11px; }
.quick, .find, .help, .winctl { display: flex; align-items: center; }
.logo { width: 20px; height: 20px; background: linear-gradient(100deg, #f0355f 0 30%, #e0134a 30%); color: #fff; font: bold 13px/20px "Open Sans", sans-serif; border-radius: 2px; }
.car { width: 16px; height: 18px; }
.car::after, .drop::after, .foot::after, .tall button::after, .more::after, .car2::after { content: ""; border: 3px solid transparent; border-top: 3px solid #dfe1e4; border-bottom: 0; }
.car.thin { width: 9px; }
.car.dim::after { border-top-color: #777d86; }
.q { width: 21px; height: 20px; }
.q.thin { width: 17px; }
.quick .thin + .q { width: 22px; }
.quick .q.thin { width: 17px; }
.share, .login { gap: 2px; color: #dfe1e4; }
.share { color: #7cc0f5; }
.tri { border: 4px solid transparent; border-left: 4px solid #dfe1e4; border-right: 0; margin-right: 6px; }
.find input { width: 156px; height: 18px; background: #434d5e; font-size: 10px; font-style: italic; padding-left: 2px; }
.find input::placeholder { color: #b7bcc5; }
.help { margin-left: 50px; }
.vsep { width: 1px; height: 15px; background: #49505c; margin: 0 7px 0 6px; }
.qm { width: 15px; height: 15px; border-radius: 50%; background: #d7d9dc; color: #222933; font: bold 11px/15px "Open Sans", sans-serif; }
.winctl { margin-left: 13px; }
.winctl button { width: 40px; height: 24px; }

.tabs { display: flex; height: 22px; flex: none; align-items: stretch; gap: 16px; padding: 4px 0 0 6px; line-height: 18px; color: #c8cbd0; }
.tabs .on { background: #3b4453; padding: 0 8px; margin-right: -6px; color: #fff; }
.tabs .fold { margin-left: 10px; gap: 3px; }
.fold span { width: 13px; height: 8px; background: #e4e4e4; display: flex; align-items: center; justify-content: center; }
.fold span::after { content: ""; border: 2px solid transparent; border-bottom: 2px solid #333; border-top: 0; }
.fold::after { content: ""; border: 3px solid transparent; border-top: 3px solid #dfe1e4; border-bottom: 0; }

.ribbon { display: flex; flex: none; height: 91px; background: #3b4453; padding: 1px 0 4px; margin: 0 2px 0 3px; box-shadow: inset 0 -3px #3b4453, inset 0 -4px #2a313d; }
.panel { display: flex; flex-direction: column; justify-content: space-between; padding-top: 4px; border-right: 2px solid #2a313d; flex: none; }
.tools { display: flex; }
.big { flex-direction: column; width: 35px; line-height: 15px; justify-content: flex-start; }
.big svg { width: 30px; height: 32px; }
.big.wide { width: 38px; }
.big.slim { width: 30px; }
.big.wider { width: 46px; }
.more::after { margin-top: 3px; }
.small { display: grid; grid-auto-rows: 21px; grid-template-columns: 28px; align-items: center; justify-items: start; }
.drop::after { margin-left: 5px; }
.foot { height: 18px; gap: 6px; width: 100%; }
.foot::after, .tall button::after { border-width: 4px 4px 0; }
.draw { width: 185px; }
.draw .tools { padding-left: 2px; }
.modify { width: 117px; padding-left: 4px; }
.g4 { grid-template-columns: 16px 16px 28px 16px; column-gap: 9px; }
.note { width: 110px; padding-left: 4px; }
.note .big { width: 36px; }
.note .small { margin-left: 2px; }
.layer { width: 221px; }
.layer .tools { gap: 1px; }
.lay { flex: 1; padding-right: 1px; }
.combo { width: 100%; height: 19px; background: #4d5a6e; border: 1px solid #2a313d; justify-content: flex-start; padding: 0 3px; margin-bottom: 2px; }
.combo svg { width: 14px; height: 14px; margin-right: 3px; }
.combo i { width: 12px; height: 12px; background: #fff; margin-right: 4px; }
.combo::after { content: ""; margin-left: auto; border: 4px solid transparent; border-top: 4px solid #dfe1e4; border-bottom: 0; }
.g5 { grid-template-columns: repeat(5, 16px); column-gap: 5px; padding-left: 2px; }
.block { width: 102px; }
.block .tools { gap: 1px; }
.block .big { width: 34px; }
.block .small { margin-left: 2px; }
.tall { display: flex; gap: 3px; background: #2a313d; padding: 0 2px 0 1px; }
.tall button { flex-direction: column; justify-content: flex-start; width: 51px; background: #4d5a6e; padding: 4px 0 5px; line-height: 15px; }
.tall svg { width: 29px; height: 30px; }
.tall button::after { margin-top: auto; }
.view { flex: 1; border: 0; padding-left: 3px; }
.view .big { width: 46px; }
.view .foot { justify-content: flex-start; }
.view .foot svg { width: 8px; height: 8px; order: 2; }

.work { flex: 1; display: flex; min-height: 0; margin: 0 1px 0 2px; background: #3b4453; padding-bottom: 4px; gap: 3px; }
aside { width: 99px; padding: 2px 0 4px; display: flex; flex-direction: column; }
aside h2 { height: 24px; background: linear-gradient(#2b323e 0 19px, #3b4453 20px); border-radius: 4px 4px 0 0; padding-left: 14px; line-height: 17px; flex: none; display: flex; }
aside h2::before { content: ""; width: 3px; height: 9px; margin: 4px 5px 0 -8px; background: repeating-linear-gradient(#99a 0 1px, transparent 1px 3px); }
aside ul { flex: 1; background: #f0f0f0; display: grid; grid-template-rows: repeat(21, 1fr) 145px; color: #111; border: 1px solid #d5d8dc; }
aside li { display: flex; align-items: center; padding-left: 6px; min-height: 0; line-height: 14px; }
aside li::before { content: ""; border: 4px solid transparent; border-left: 5px solid #2f6496; border-right: 0; margin-right: 13px; }
.canvas { position: relative; flex: 1; background: #000; min-width: 0; overflow: hidden; }
.vp { padding: 4px 3px; font-size: 11px; }
.wctl { position: absolute; right: 11px; top: 9px; display: flex; gap: 8px; }
.wctl svg { width: 9px; height: 9px; }
.cube { position: absolute; right: 10px; top: 30px; width: 100px; height: 100px; }
.cube text { font: 13px "Noto Sans CJK SC", sans-serif; fill: #8f8f8f; text-anchor: middle; }
.cube .face { font-size: 22px; fill: #3f444b; }
.ucsname { position: absolute; right: 36px; top: 143px; width: 50px; height: 15px; border-radius: 4px; border: 1px solid #a8a8b2; background: #8d8d99; color: #6a6a74; font-size: 10px; line-height: 13px; gap: 5px; }
.ucsname i { border: 4px solid transparent; border-top: 4px solid #b0b0bb; border-bottom: 0; }
.nav { position: absolute; right: 4px; top: 181px; width: 28px; height: 186px; }

.bar { position: absolute; height: 21px; display: flex; align-items: center; background: #3b4453; border: 1px solid #2c3440; }
.bar::before, .grip { content: ""; width: 5px; height: 13px; margin: 0 0 0 2px; background: linear-gradient(#3b4453 50%, transparent 50%) 0 0/2px 2px, linear-gradient(90deg, #a9adb5 50%, transparent 50%) 0 0/2px 2px; }
.bar button { width: 20px; height: 19px; }
.bar hr { width: 2px; height: 16px; margin: 0 2px; border: 0; background: #5b6473; }
.bar .close { width: 7px; height: 9px; align-self: flex-start; }
.bar .close svg { width: 6px; height: 6px; }
.b1 { left: 63px; top: 125px; }
.b2 { left: 61px; top: 157px; }
.b3 { left: 62px; top: 184px; }
.b4 { left: 61px; top: 210px; padding-right: 1px; }
.b5 { left: 60px; top: 231px; }
.b3 hr, .b5 hr { margin-right: 1px; }

.ucs { position: absolute; left: 7px; bottom: 6px; width: 72px; height: 70px; }
.ucs text { font: 300 17px Lato, sans-serif; fill: #d8d8d8; text-anchor: middle; }
.cross { position: absolute; right: 23px; bottom: 0; width: 86px; height: 78px; }
.cmd { position: absolute; left: 196px; right: 197px; bottom: 1px; height: 22px; display: flex; align-items: center; background: #24282f; }
.cmd .grip { margin: 0 2px 0 3px; }
.cmd .q { width: 19px; }
.cmd .q svg { width: 14px; height: 14px; }
.cmd .field { flex: 1; align-self: stretch; background: #b3b3b3; border: 1px solid #8a8a8a; display: flex; align-items: center; margin-left: 2px; padding: 0 4px 0 2px; }
.field i { border: 4px solid transparent; border-top: 4px solid #444; border-bottom: 0; margin: 0 6px 0 2px; }
.field b { border: 3px solid transparent; border-bottom: 3px solid #444; border-top: 0; }
.field input { flex: 1; font-style: italic; }
.field input::placeholder { color: #666; }

footer { display: flex; justify-content: space-between; height: 27px; flex: none; padding: 0 1px 5px 6px; }
.sheets { display: flex; align-items: center; }
.sheets .q { width: 34px; }
.sheets .add { width: 32px; }
.sheets a { padding: 0 8px; height: 21px; line-height: 20px; align-self: flex-start; }
.sheets a.on { padding: 0 14px; background: #3b4453; clip-path: polygon(16% 0, 100% 0, 84% 100%, 0 100%); color: #fff; }
.sheets .on + a { padding-left: 6px; }
.sheets i { width: 1px; height: 14px; background: #5b616b; transform: rotate(22deg); margin: 0 1px; }
.sheets .q svg { margin-top: -2px; }
.status { display: flex; gap: 1px; }
.seg { display: flex; align-items: center; background: #3b4453; height: 21px; margin-top: 1px; }
.seg button { width: 21px; height: 20px; }
.seg .act { background: #5f90c6; width: 20px; }
.seg .car { width: 15px; }
.seg .car::after, .car2::after { border-width: 4px 3px 0; }
button.seg { padding: 0 2px; }
.ratio, .coord, .seg .pct { font-size: 10px; }
.ratio { gap: 4px; }
.coord { width: 123px; justify-content: flex-end; }
button.coord { padding-right: 5px; }
.ucsseg { margin-left: 1px; }
.seg .pct { width: 54px; }
.last { padding: 0 2px 0 1px; }
.smudge { position: absolute; left: 0; top: 0; width: 320px; height: 160px; pointer-events: none; }
```
FILE: icons.js
```js
// Prepends the sprite icon named in data-icon to each button.
function addIcon(el, name) {
  const svg = document.createElementNS('http://www.w3.org/2000/svg', 'svg');
  const use = document.createElementNS('http://www.w3.org/2000/svg', 'use');
  use.setAttribute('href', '#' + name);
  svg.appendChild(use);
  el.prepend(svg);
  if (!el.textContent.trim()) el.setAttribute('aria-label', name);
}
document.querySelectorAll('[data-icon]').forEach(el => addIcon(el, el.dataset.icon));

// Floating toolbars: icon names, with "|" for a separator.
document.querySelectorAll('[data-bar]').forEach(bar => {
  bar.dataset.bar.split(' ').forEach(name => {
    const el = document.createElement(name === '|' ? 'hr' : 'button');
    if (name !== '|') addIcon(el, name);
    bar.appendChild(el);
  });
  const close = document.createElement('button');
  close.className = 'close';
  addIcon(close, 'wx');
  bar.appendChild(close);
});
```
